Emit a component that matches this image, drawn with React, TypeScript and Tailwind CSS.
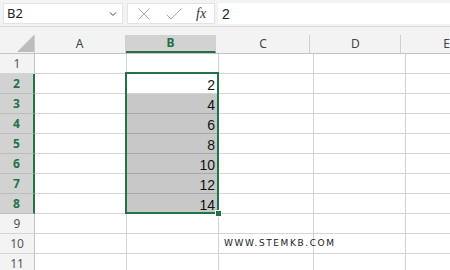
import React from "react";

const cols = [
  { l: "A", w: "w-[92px]" },
  { l: "B", w: "w-[92px]" },
  { l: "C", w: "w-[95px]" },
  { l: "D", w: "w-[92px]" },
];

const data: Record<number, number> = { 2: 2, 3: 4, 4: 6, 5: 8, 6: 10, 7: 12, 8: 14 };

export default function App() {
  const rows = Array.from({ length: 11 }, (_, i) => i + 1);
  return (
    <div className="relative w-[450px] h-[270px] overflow-hidden bg-white" style={{ fontFamily: '"Noto Sans", "Liberation Sans", sans-serif' }}>
      {/* formula bar */}
      <div className="h-[27px] bg-[#f3f3f3] border-b border-[#dadada] flex items-start pt-[3px] pl-[3px]">
        <div className="w-[120px] h-[21px] bg-white border border-[#e3e3e3] flex items-center justify-between pl-[3px] pr-[5px]">
          <span className="text-[13px] text-[#222] leading-none">B2</span>
          <svg width="8" height="6" viewBox="0 0 8 6"><path d="M1 1.5 L4 4.5 L7 1.5" stroke="#444" strokeWidth="1" fill="none" /></svg>
        </div>
        <div className="ml-[4px] w-[88px] h-[21px] bg-white border border-[#e3e3e3] flex items-center">
          <svg className="ml-[10px]" width="12" height="12" viewBox="0 0 12 12"><path d="M0.5 0.5 L11.5 11.5 M11.5 0.5 L0.5 11.5" stroke="#a8a8a8" strokeWidth="1" /></svg>
          <svg className="ml-[16px]" width="16" height="12" viewBox="0 0 16 12"><path d="M0.5 6.5 L5 11 L15.5 0.5" stroke="#a8a8a8" strokeWidth="1" fill="none" /></svg>
          <span className="ml-[14px] text-[14px] italic text-[#333] leading-none" style={{ fontFamily: '"Liberation Serif", serif' }}>fx</span>
        </div>
        <div className="ml-[3px] flex-1 h-[21px] bg-white flex items-center pl-[4px]">
          <span className="text-[14px] text-[#222] leading-none" style={{ fontFamily: '"Liberation Sans", sans-serif' }}>2</span>
        </div>
      </div>
      {/* header spacer */}
      <div className="h-[8px] bg-[#f3f3f3]" />
      {/* column headers */}
      <div className="flex h-[19px] bg-[#f3f3f3] border-b border-[#c4c4c4]">
        <div className="w-[35px] border-r border-[#d0d0d0] relative">
          <svg className="absolute left-[17px] top-0" width="17" height="17" viewBox="0 0 17 17"><path d="M17 0 L17 17 L0 17 Z" fill="#bcbcbc" /></svg>
        </div>
        {cols.map((c) => (
          <div
            key={c.l}
            className={
              c.l === "B"
                ? `${c.w} border-r border-[#d0d0d0] bg-[#d2d2d2] border-b-2 border-b-[#217346] flex items-center justify-center text-[12px] font-bold text-[#217346]`
                : `${c.w} border-r border-[#d0d0d0] flex items-center justify-center text-[12px] text-[#444]`
            }
          >
            {c.l}
          </div>
        ))}
        <div className="flex-1 flex items-center pl-[42px] text-[12px] text-[#444] whitespace-nowrap">E</div>
      </div>
      {/* rows */}
      {rows.map((r) => {
        const sel = r >= 2 && r <= 8;
        return (
          <div key={r} className="flex h-[20px]">
            <div
              className={
                sel
                  ? "w-[35px] bg-[#d2d2d2] border-b border-[#bdbdbd] border-r-2 border-r-[#217346] flex items-center justify-center text-[12px] font-bold text-[#217346]"
                  : "w-[35px] bg-[#f3f3f3] border-b border-[#d4d4d4] border-r border-r-[#c4c4c4] flex items-center justify-center text-[12px] text-[#555]"
              }
            >
              {r}
            </div>
            <div className="w-[92px] border-r border-b border-[#d4d4d4]" />
            <div
              className={
                r >= 3 && r <= 8
                  ? "w-[92px] bg-[#c8c8c8] border-r border-b border-[#a8a8a8] flex items-center justify-end pr-[3px]"
                  : "w-[92px] border-r border-b border-[#d4d4d4] flex items-center justify-end pr-[3px]"
              }
            >
              {data[r] !== undefined && (
                <span className="text-[14px] text-[#111] leading-none pt-[2px]" style={{ fontFamily: '"Liberation Sans", sans-serif' }}>
                  {data[r]}
                </span>
              )}
            </div>
            <div className="w-[95px] border-r border-b border-[#d4d4d4] flex items-center pl-[5px] whitespace-nowrap">
              {r === 10 && (
                <span className="text-[9px] text-[#222] tracking-[1.6px] leading-none" style={{ fontFamily: '"DejaVu Sans", sans-serif' }}>
                  WWW.STEMKB.COM
                </span>
              )}
            </div>
            <div className="w-[92px] border-r border-b border-[#d4d4d4]" />
            <div className="flex-1 border-b border-[#d4d4d4]" />
          </div>
        );
      })}
      {/* selection overlay */}
      <div className="absolute left-[125px] top-[72px] w-[94px] h-[142px] border-2 border-[#217346] pointer-events-none" />
      <div className="absolute left-[215px] top-[210px] w-[7px] h-[7px] bg-[#217346] border border-white" />
    </div>
  );
}
